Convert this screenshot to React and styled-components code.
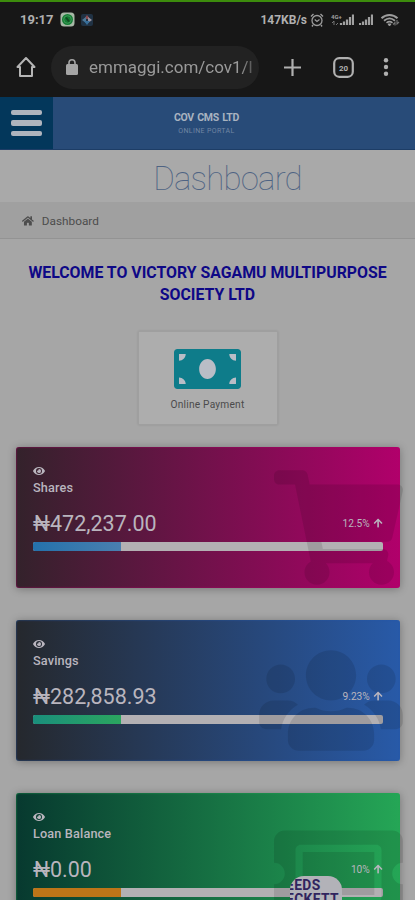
import React from 'react';
import styled, { createGlobalStyle } from 'styled-components';
import {
  FaArrowUp,
  FaEye,
  FaHome,
  FaMoneyBill,
  FaShoppingCart,
  FaTicketAlt,
  FaUsers,
} from 'react-icons/fa';

const GlobalStyle = createGlobalStyle`
  * {
    box-sizing: border-box;
  }

  body {
    margin: 0;
    background: #a6a6a6;
    font-family: Roboto, 'Liberation Sans', sans-serif;
    overflow: hidden;
  }
`;

const Screen = styled.div`
  position: relative;
  width: 415px;
  height: 900px;
  overflow: hidden;
  background: #a6a6a6;
`;

/* 상태바 + 브라우저 주소창 */
const BrowserTop = styled.div`
  height: 97px;
  border-top: 2px solid #3c8c0c;
  background: #171717;
  color: #b0b0b0;
`;

const StatusBar = styled.div`
  display: flex;
  align-items: center;
  height: 35px;
  padding: 0 15px 0 20px;

  svg {
    display: block;
    flex-shrink: 0;
  }

  .time {
    width: 40px;
    font-size: 13px;
    font-weight: 700;
  }

  .apps {
    display: flex;
    align-items: center;
    gap: 6px;
  }

  .speed {
    margin-left: auto;
    margin-right: 3px;
    font-size: 12px;
    font-weight: 700;
  }

  .signals {
    display: flex;
    align-items: center;
    gap: 7px;
  }

  .bars {
    display: flex;
    gap: 5px;
  }
`;

const AddressBar = styled.div`
  display: flex;
  align-items: center;
  height: 60px;
  padding: 0 23px 0 16px;

  svg {
    display: block;
    flex-shrink: 0;
  }

  .actions {
    display: flex;
    align-items: center;
    margin-left: 25px;
    gap: 32px;
  }

  .more {
    margin-left: -3px;
  }
`;

const UrlField = styled.div`
  display: flex;
  align-items: center;
  width: 208px;
  height: 43px;
  margin-left: 15px;
  padding: 0 6px 0 15px;
  border-radius: 22px;
  background: #222222;

  .url {
    flex: 1;
    margin-left: 11px;
    overflow: hidden;
    font-size: 17px;
    white-space: nowrap;
    color: #9a9a9a;
    mask-image: linear-gradient(to right, #000 92%, rgba(0, 0, 0, 0.4));
  }
`;

/* 사이트 헤더 */
const SiteHeader = styled.header`
  display: flex;
  height: 53px;
  border-bottom: 1px solid #1d3d66;
  background: #284b78;
`;

const MenuButton = styled.div`
  display: flex;
  flex-direction: column;
  align-items: center;
  justify-content: center;
  gap: 5px;
  width: 53px;
  background: #03375b;

  span {
    width: 31px;
    height: 5.6px;
    border-radius: 2px;
    background: #afb4bd;
  }
`;

const Brand = styled.div`
  flex: 1;
  padding: 14px 55px 0 0;
  text-align: center;

  .name {
    font-size: 10.5px;
    font-weight: 700;
    line-height: 13px;
    letter-spacing: -0.3px;
    word-spacing: 1px;
    color: #a9b3c0;
  }

  .portal {
    font-size: 7px;
    line-height: 14px;
    letter-spacing: 0.35px;
    color: #7086a3;
  }
`;

const PageTitle = styled.h1`
  height: 52px;
  margin: 0;
  padding-left: 40px;
  font-size: 33px;
  font-weight: 100;
  line-height: 58px;
  letter-spacing: -0.8px;
  text-align: center;
  color: #4e6383;
  background: #a9a9a9;
`;

const Breadcrumb = styled.div`
  display: flex;
  align-items: center;
  gap: 8px;
  height: 37px;
  padding: 2px 0 0 22px;
  border-bottom: 1px solid #939393;
  background: #a0a0a0;
  font-size: 11.8px;
  color: #4d4d4d;
`;

const Welcome = styled.h2`
  margin: 23px 0 0;
  font-size: 15.85px;
  font-weight: 700;
  line-height: 22px;
  text-align: center;
  white-space: nowrap;
  color: #0e0886;
`;

const PaymentCard = styled.div`
  display: flex;
  flex-direction: column;
  align-items: center;
  width: 140px;
  height: 94px;
  margin: 25px auto 22px;
  padding-top: 10px;
  border: 1px solid #9f9f9f;
  background: #adadad;
  box-shadow: 0 0 2px rgba(0, 0, 0, 0.12);
  color: #0e7c8a;

  .bill {
    width: 67px;
    height: 54px;
    background: linear-gradient(#b9bdc6, #b9bdc6) center / 60px 33px no-repeat;
  }

  .label {
    margin-top: 2px;
    font-size: 10.2px;
    line-height: 14px;
    letter-spacing: 0.2px;
    color: #4b4b4b;
  }
`;

/* 잔액 카드 */
const BalanceCard = styled.section`
  position: relative;
  width: 384px;
  height: 141px;
  margin: 0 0 32px 16px;
  padding: 18px 17px 0;
  border-radius: 3px;
  background: ${({ $from, $to }) => `linear-gradient(to right, ${$from}, ${$to})`};
  box-shadow: 0 1px 9px rgba(0, 0, 0, 0.3), inset 0 0 2px ${({ $to }) => $to};
  color: #b9b5be;

  .eye {
    display: block;
    width: 12px;
    height: 12px;
  }

  .name {
    margin-top: 3px;
    font-size: 12.7px;
    font-weight: 500;
    line-height: 16px;
    letter-spacing: 0.15px;
  }

  .figures {
    position: relative;
    z-index: 2;
    display: flex;
    align-items: center;
    justify-content: space-between;
    height: 26px;
    margin-top: 14px;
  }

  .amount {
    font-size: 21.5px;
  }

  .growth {
    display: flex;
    align-items: center;
    gap: 3px;
    font-size: 10.2px;
  }
`;

const Progress = styled.div`
  height: 9px;
  margin-top: 6px;
  border-radius: 2px;
  overflow: hidden;
  background: #b3b0b3;

  div {
    width: 25%;
    height: 100%;
    background: ${({ $fill }) => $fill};
  }
`;

/* 카드 오른쪽에 겹쳐지는 큰 아이콘 */
const Watermark = styled.div`
  position: absolute;
  top: 23px;
  right: -3px;
  line-height: 0;
  color: rgba(0, 0, 0, 0.11);

  svg {
    width: ${({ $width }) => $width}px;
    height: 115px;
  }
`;

const FloatingLogo = styled.div`
  position: absolute;
  left: 290px;
  top: 876px;
  width: 52px;
  height: 52px;
  padding-top: 2px;
  border-radius: 14px;
  overflow: hidden;
  background: #b2b2b8;
  font-size: 13.8px;
  font-weight: 700;
  line-height: 14px;
  white-space: nowrap;
  color: #30245e;

  div {
    height: 14px;
    margin-left: -4px;
    letter-spacing: 0.4px;
  }
`;

const cards = [
  {
    name: 'Shares',
    amount: '₦472,237.00',
    growth: '12.5%',
    from: '#33222b',
    to: '#b1006b',
    fill: 'linear-gradient(to right, #2471ab, #4a7fb0)',
    icon: FaShoppingCart,
    iconWidth: 129,
  },
  {
    name: 'Savings',
    amount: '₦282,858.93',
    growth: '9.23%',
    from: '#25282d',
    to: '#285aa8',
    fill: 'linear-gradient(to right, #1a8f7c, #2ba55f)',
    icon: FaUsers,
    iconWidth: 144,
  },
  {
    name: 'Loan Balance',
    amount: '₦0.00',
    growth: '10%',
    from: '#07392f',
    to: '#25a656',
    fill: '#bd7518',
    icon: FaTicketAlt,
    iconWidth: 129,
  },
];

const Signal = ({ label }) => (
  <svg width={label ? 23 : 14} height="14" viewBox={label ? '0 0 23 14' : '9 0 14 14'}>
    {label && (
      <>
        <text x="0" y="5.5" fontSize="6" fontWeight="700" fill="#a0a0a0">
          {label}
        </text>
        <path d="M1 10l2-2M3 8v4M5 12l2-2" stroke="#777" strokeWidth="1" />
      </>
    )}
    <path
      d="M10 12V10M13 12V8.5M16 12V6.5M19 12V4M22 12V1.5"
      stroke="#a0a0a0"
      strokeWidth="2.2"
    />
  </svg>
);

const StatusArea = () => (
  <StatusBar>
    <span className="time">19:17</span>
    <div className="apps">
      <svg width="15" height="15" viewBox="0 0 15 15">
        <rect x="0.5" y="0.5" width="14" height="14" rx="3.5" fill="#a7b8a6" />
        <circle cx="7.5" cy="7.5" r="5.5" fill="#147d34" />
        <circle cx="7.5" cy="7.5" r="3.8" fill="none" stroke="#49a15f" strokeWidth="0.8" />
        <path d="M6 5.500l3 4" stroke="#114a20" strokeWidth="2" />
      </svg>
      <svg width="12" height="12" viewBox="0 0 12 12">
        <rect width="12" height="12" rx="2" fill="#203244" />
        <path d="M6 1l3 4H3z" fill="#8c4b50" />
        <path d="M1 6l4-3v6z" fill="#4c7897" />
        <path d="M11 6L7 3v6z" fill="#9a929f" />
        <path d="M6 11L3 7h6z" fill="#376e9a" />
      </svg>
    </div>
    <span className="speed">147KB/s</span>
    <div className="signals">
      <svg width="14" height="14" viewBox="0 0 14 14" fill="none" stroke="#9c9c9c">
        <circle cx="7" cy="7.5" r="5" strokeWidth="1.3" />
        <path d="M1 3.5L3.5 1M13 3.5L10.5 1M3 12l-1 1.5M11 12l1 1.5" strokeWidth="1.4" />
        <path d="M4.7 6.5L7 8.5l2.5-2" strokeWidth="1.2" />
      </svg>
      <div className="bars">
        <Signal label="4G+" />
        <Signal />
      </div>
      <svg width="20" height="14" viewBox="0 0 20 14" fill="none" stroke="#9c9c9c">
        <path d="M1.5 5.2C6 .8 13 .8 17.5 5.2" strokeWidth="2" />
        <path d="M4 7.7c3.500-3 7.500-3 11 0" strokeWidth="1.8" />
        <path d="M6.500 9.800c2-1.500 4-1.500 6 0" strokeWidth="1.6" />
        <path d="M8 11h3l-1.5 2z" fill="#9c9c9c" />
        <path d="M13 11.5l2-2v3M17 7v4l2-2" strokeWidth="1.1" stroke="#777" />
      </svg>
    </div>
  </StatusBar>
);

const Browser = () => (
  <BrowserTop>
    <StatusArea />
    <AddressBar>
      <svg width="20" height="22" viewBox="0 0 20 22" fill="none" stroke="#b5b5b5">
        <path d="M1.5 11L10 2l8.5 9H16v9H4v-9z" strokeWidth="2" strokeLinejoin="round" />
      </svg>
      <UrlField>
        <svg width="12" height="16" viewBox="0 0 12 16">
          <rect y="5" width="12" height="11" rx="1.5" fill="#a5a5a5" />
          <path d="M3 6V3.8a3 3 0 0 1 6 0V6" fill="none" stroke="#a5a5a5" strokeWidth="1.6" />
        </svg>
        <span className="url">emmaggi.com/cov1/l</span>
      </UrlField>
      <div className="actions">
        <svg width="17" height="17" viewBox="0 0 17 17">
          <path d="M8.5 0v17M0 8.5h17" stroke="#b0b0b0" strokeWidth="2.2" />
        </svg>
        <svg width="21" height="21" viewBox="0 0 21 21">
          <rect
            x="1.2"
            y="1.2"
            width="18.6"
            height="18.6"
            rx="5"
            fill="none"
            stroke="#b0b0b0"
            strokeWidth="2.2"
          />
          <text x="6" y="13.5" fontSize="8" fontWeight="700" fill="#b0b0b0">
            20
          </text>
        </svg>
        <svg className="more" width="6" height="18" viewBox="0 0 6 18" fill="#b0b0b0">
          <circle cx="3" cy="2.3" r="2.2" />
          <circle cx="3" cy="9" r="2.2" />
          <circle cx="3" cy="15.7" r="2.2" />
        </svg>
      </div>
    </AddressBar>
  </BrowserTop>
);

const Balance = ({ name, amount, growth, from, to, fill, icon: Icon, iconWidth }) => {
  return (
    <BalanceCard $from={from} $to={to}>
      <FaEye className="eye" />
      <div className="name">{name}</div>
      <div className="figures">
        <span className="amount">{amount}</span>
        <span className="growth">
          {growth}
          <FaArrowUp />
        </span>
      </div>
      <Progress $fill={fill}>
        <div />
      </Progress>
      <Watermark $width={iconWidth}>
        <Icon />
      </Watermark>
    </BalanceCard>
  );
};

const App = () => {
  return (
    <>
      <GlobalStyle />
      <Screen>
        <Browser />
        <SiteHeader>
          <MenuButton>
            <span />
            <span />
            <span />
          </MenuButton>
          <Brand>
            <div className="name">COV CMS LTD</div>
            <div className="portal">ONLINE PORTAL</div>
          </Brand>
        </SiteHeader>
        <PageTitle>Dashboard</PageTitle>
        <Breadcrumb>
          <FaHome />
          <span>Dashboard</span>
        </Breadcrumb>
        <Welcome>
          WELCOME TO VICTORY SAGAMU MULTIPURPOSE
          <br />
          SOCIETY LTD
        </Welcome>
        <PaymentCard>
          <FaMoneyBill className="bill" />
          <span className="label">Online Payment</span>
        </PaymentCard>
        {cards.map((card) => (
          <Balance key={card.name} {...card} />
        ))}
        <FloatingLogo>
          <div>EEDS</div>
          <div>ECKETT</div>
        </FloatingLogo>
      </Screen>
    </>
  );
};

export default App;
